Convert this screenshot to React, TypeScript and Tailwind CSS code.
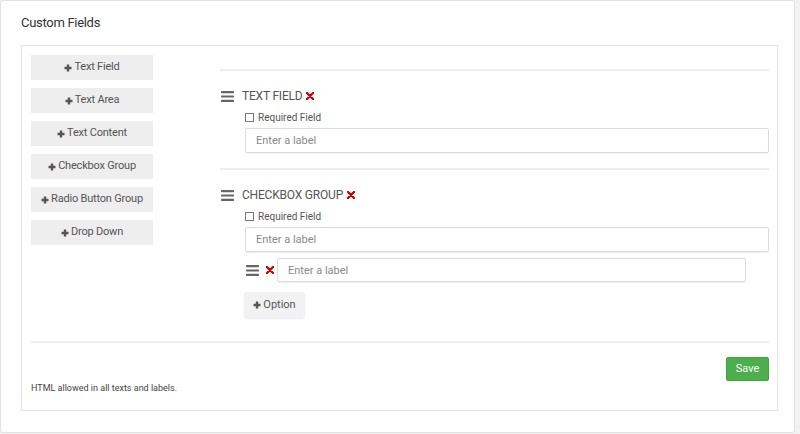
import React from "react";

const font = { fontFamily: "Roboto, 'Liberation Sans', sans-serif" };

function Bars({ className = "" }: { className?: string }) {
  return (
    <svg width="13" height="11" viewBox="0 0 13 11" className={className}>
      <rect x="0" y="0" width="13" height="2.2" rx="0.6" fill="#666" />
      <rect x="0" y="4.4" width="13" height="2.2" rx="0.6" fill="#666" />
      <rect x="0" y="8.8" width="13" height="2.2" rx="0.6" fill="#666" />
    </svg>
  );
}

function Cross() {
  return (
    <svg width="8" height="8" viewBox="0 0 8 8">
      <path d="M1 1L7 7M7 1L1 7" stroke="#cc0000" strokeWidth="2.4" strokeLinecap="round" />
    </svg>
  );
}

function Plus() {
  return (
    <svg width="8" height="8" viewBox="0 0 8 8" className="mr-[2px]">
      <path d="M4 0.5V7.5M0.5 4H7.5" stroke="#555" strokeWidth="2.4" />
    </svg>
  );
}

const fieldTypes = [
  "Text Field",
  "Text Area",
  "Text Content",
  "Checkbox Group",
  "Radio Button Group",
  "Drop Down",
];

function LabelInput({ className = "" }: { className?: string }) {
  return (
    <input
      placeholder="Enter a label"
      className={`h-[25px] rounded-[2px] border border-[#dcdcdc] px-[10px] text-[11px] text-[#555] shadow-[0_1px_1px_rgba(0,0,0,0.06)] outline-none placeholder:text-[#8a8a8a] ${className}`}
    />
  );
}

function Required() {
  return (
    <label className="ml-[25px] mt-[9px] flex h-[10px] items-center gap-[4px] text-[10px] text-[#555]">
      <span className="h-[9px] w-[9px] border border-[#777] bg-white" />
      Required Field
    </label>
  );
}

function FieldHead({ title }: { title: string }) {
  return (
    <div className="mt-[18px] flex h-[14px] items-center">
      <Bars className="ml-[1px]" />
      <span className="ml-[8px] text-[12px] uppercase tracking-[-0.2px] text-[#555]">{title}</span>
      <span className="ml-[4px] flex items-center">
        <Cross />
      </span>
    </div>
  );
}

export default function App() {
  return (
    <div className="h-[434px] w-[800px] bg-[#f2f2f2]" style={font}>
      <div className="h-[433px] w-[795px] rounded-[3px] border border-[#e2e2e2] bg-white px-[20px] pt-[12px]">
        <h2 className="text-[13px] leading-[20px] tracking-[-0.3px] text-[#333]">Custom Fields</h2>

        <div className="mt-[12px] h-[366px] w-[757px] border border-[#e4e4e4] pl-[9px] pr-[8px] pt-[9px]">
          <div className="flex">
            <div className="flex w-[122px] flex-col gap-[8px]">
              {fieldTypes.map((t) => (
                <button
                  key={t}
                  className="flex h-[25px] items-center justify-center bg-[#eeeeee] text-[11px] tracking-[-0.2px] text-[#555]"
                >
                  <Plus />
                  {t}
                </button>
              ))}
            </div>

            <div className="ml-[67px] flex w-[549px] flex-col pt-[14px]">
              <div className="h-[2px] bg-[#eeeeee]" />

              <FieldHead title="Text Field" />
              <Required />
              <LabelInput className="ml-[25px] mt-[6px] w-[524px]" />

              <div className="mt-[15px] h-[2px] bg-[#eeeeee]" />

              <FieldHead title="Checkbox Group" />
              <Required />
              <LabelInput className="ml-[25px] mt-[6px] w-[524px]" />

              <div className="ml-[26px] mt-[6px] flex h-[24px] items-center">
                <Bars />
                <span className="ml-[7px] flex items-center">
                  <Cross />
                </span>
                <LabelInput className="ml-[3px] !h-[24px] w-[469px]" />
              </div>

              <button className="ml-[24px] mt-[10px] flex h-[26px] w-[61px] items-center justify-center rounded-[3px] bg-[#f2f2f2] text-[11px] text-[#555] shadow-[0_1px_2px_rgba(0,0,0,0.08)]">
                <Plus />
                Option
              </button>
            </div>
          </div>

          <div className="mt-[23px] h-[2px] w-[738px] bg-[#eeeeee]" />

          <div className="mt-[14px] flex w-[738px] justify-end">
            <button className="h-[24px] w-[43px] rounded-[2px] border border-[#43a443] bg-[#4cae4c] text-[11px] text-white">
              Save
            </button>
          </div>
          <p className="mt-[2px] text-[9px] leading-[11px] text-[#444]">HTML allowed in all texts and labels.</p>
        </div>
      </div>
    </div>
  );
}
